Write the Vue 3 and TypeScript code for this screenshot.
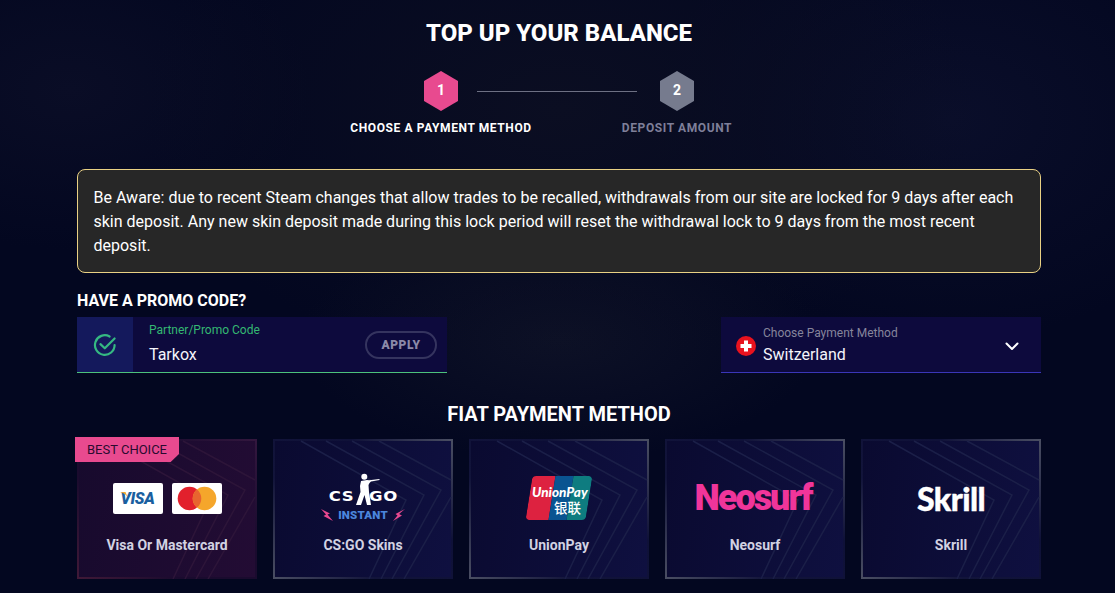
<script setup lang="ts">
interface Method { name: string; kind: string; best?: boolean }
const methods: Method[] = [
  { name: 'Visa Or Mastercard', kind: 'cards', best: true },
  { name: 'CS:GO Skins', kind: 'csgo' },
  { name: 'UnionPay', kind: 'union' },
  { name: 'Neosurf', kind: 'neosurf' },
  { name: 'Skrill', kind: 'skrill' },
]
</script>

<template>
  <main class="page">
    <h1 class="title">TOP UP YOUR BALANCE</h1>

    <section class="stepper">
      <div class="hex pink">1</div>
      <div class="line"></div>
      <div class="hex grey">2</div>
      <div class="step-label active">CHOOSE A PAYMENT METHOD</div>
      <div></div>
      <div class="step-label">DEPOSIT AMOUNT</div>
    </section>

    <p class="alert">Be Aware: due to recent Steam changes that allow trades to be recalled, withdrawals from our site are locked for 9 days after each skin deposit. Any new skin deposit made during this lock period will reset the withdrawal lock to 9 days from the most recent deposit.</p>

    <h2 class="promo-title">HAVE A PROMO CODE?</h2>
    <section class="fields">
      <div class="promo">
        <div class="promo-icon">
          <svg width="24" height="24" viewBox="0 0 22 22" fill="none" stroke="#35b982" stroke-width="2" stroke-linecap="round" stroke-linejoin="round">
            <path d="M19.8 11a9 9 0 1 1-4.6-7.8" />
            <path d="M6.8 10.2l4 3.8 9-9" />
          </svg>
        </div>
        <div class="promo-body">
          <div class="promo-label">Partner/Promo Code</div>
          <div class="promo-value">Tarkox</div>
        </div>
        <div class="apply">APPLY</div>
      </div>

      <div class="select">
        <svg class="flag" width="20" height="20" viewBox="0 0 20 20">
          <circle cx="10" cy="10" r="10" fill="#e8121e" />
          <path d="M8 4.5h4V8h3.5v4H12v3.500H8V12H4.500V8H8z" fill="#fff" />
        </svg>
        <div class="select-body">
          <div class="select-label">Choose Payment Method</div>
          <div class="select-value">Switzerland</div>
        </div>
        <svg class="chev" width="14" height="9" viewBox="0 0 14 9" fill="none" stroke="#fff" stroke-width="2" stroke-linecap="round" stroke-linejoin="round">
          <path d="M1.500 1.500L7 7l5.500-5.500" />
        </svg>
      </div>
    </section>

    <h2 class="fiat-title">FIAT PAYMENT METHOD</h2>
    <section class="cards">
      <article v-for="m in methods" :key="m.name" class="card" :class="{ best: m.best }">
        <svg class="chevrons" viewBox="0 0 180 140" preserveAspectRatio="none" fill="none">
          <path d="M28 2L133 61L96 140" />
          <path d="M53 2L151 56L108 140" />
          <path d="M79 2L168 51L119 140" />
          <path d="M106 2L178 41" />
          <path d="M178 58L131 140" />
        </svg>
        <div v-if="m.best" class="badge">BEST CHOICE</div>

        <div class="logo">
          <div v-if="m.kind === 'cards'" class="paycards">
            <div class="paycard visa">
              <svg class="visa-tick" width="8" height="5" viewBox="0 0 8 5"><path d="M0 0h5.500L7.500 5C6 2.500 3 .8 0 0z" fill="#f0a830" /></svg>
              <span>VISA</span>
            </div>
            <div class="paycard">
              <svg width="40" height="25" viewBox="0 0 40 25">
                <circle cx="12.500" cy="12.500" r="11.800" fill="#e2202c" />
                <circle cx="27.500" cy="12.500" r="11.800" fill="#f5a62b" />
                <path d="M20 3.400a11.800 11.800 0 0 1 0 18.200a11.800 11.800 0 0 1 0-18.200z" fill="#e8652f" />
              </svg>
            </div>
          </div>

          <div v-else-if="m.kind === 'csgo'" class="csgo">
            <div class="csgo-main">
              <span>CS</span>
              <svg class="soldier" width="24" height="34" viewBox="0 0 24 34" fill="#fff">
                <circle cx="8.300" cy="4.700" r="3" />
                <path d="M5 9L11 8L13 8.200L23.500 7L23.500 8L15 9.500L13.500 11L12.500 13L13 20L15 33L11 33L8.500 23L5 33L0 33L4.500 20L4 14z" />
              </svg>
              <span>GO</span>
            </div>
            <div class="instant">
              <svg width="12" height="12" viewBox="0 0 12 12" fill="#e8488f"><path d="M0 0L9 4.500L6.500 5.500L12 12L2.500 7L5 5.500z" /></svg>
              <span>INSTANT</span>
              <svg width="12" height="12" viewBox="0 0 12 12" fill="#e8488f"><path d="M12 0L6 5L9 6.500L0 12L4.500 6.500L2.500 5z" /></svg>
            </div>
          </div>

          <div v-else-if="m.kind === 'union'" class="union">
            <div class="union-stripes">
              <i class="s-red"></i><i class="s-blue"></i><i class="s-teal"></i>
            </div>
            <div class="union-text">
              <b>UnionPay</b>
              <em>银联</em>
            </div>
          </div>

          <div v-else-if="m.kind === 'neosurf'" class="neosurf">Neosurf</div>
          <div v-else class="skrill">Skrill</div>
        </div>

        <div class="card-name">{{ m.name }}</div>
      </article>
    </section>
  </main>
</template>

<style>
html, body { margin: 0; background: #030720; }
</style>

<style scoped>
.page {
  box-sizing: border-box;
  width: 1115px;
  height: 593px;
  overflow: hidden;
  padding: 0 74px 0 77px;
  font-family: Roboto, "Liberation Sans", sans-serif;
  color: #fff;
  background:
    radial-gradient(ellipse 420px 260px at 560px 110px, #0b0e22 0%, rgba(11, 14, 34, 0) 100%),
    radial-gradient(ellipse 260px 120px at 560px 340px, #0d1126 0%, rgba(13, 17, 38, 0) 100%),
    radial-gradient(ellipse 240px 160px at 70px 90px, #0a0d26 0%, rgba(10, 13, 38, 0) 100%),
    radial-gradient(ellipse 300px 220px at 950px 120px, #0a0e2a 0%, rgba(10, 14, 42, 0) 100%),
    #030720;
}
.title {
  margin: 0;
  padding-top: 19px;
  font-size: 24px;
  line-height: 28px;
  font-weight: 800;
  text-align: center;
}
.stepper {
  display: grid;
  grid-template-columns: 182px 90px 110px;
  margin: 24px 0 0 273px;
  justify-items: center;
  align-items: center;
}
.hex {
  width: 34px;
  height: 40px;
  display: flex;
  align-items: center;
  justify-content: center;
  clip-path: polygon(50% 0, 100% 25%, 100% 75%, 50% 100%, 0 75%, 0 25%);
  font-size: 14px;
  font-weight: 700;
  padding-bottom: 2px;
  box-sizing: border-box;
}
.pink { background: #e84a8f; }
.grey { background: #767b8e; }
.line {
  justify-self: stretch;
  height: 1px;
  margin: 0 -15px 0 -55px;
  background: #6d7083;
}
.step-label {
  margin-top: 10px;
  font-size: 12px;
  line-height: 14px;
  font-weight: 700;
  letter-spacing: 0.6px;
  white-space: nowrap;
  color: #7e7f99;
}
.step-label.active { color: #fff; }
.alert {
  box-sizing: border-box;
  height: 104px;
  margin: 34px 0 0;
  padding: 16px 15.500px;
  border: 1px solid #e9d184;
  border-radius: 8px;
  background: #272727;
  font-size: 16px;
  line-height: 24px;
  color: #fff;
}
.promo-title {
  margin: 18px 0 0;
  font-size: 16px;
  line-height: 19px;
  font-weight: 700;
}
.fields {
  display: flex;
  justify-content: space-between;
  margin-top: 7px;
}
.promo, .select {
  box-sizing: border-box;
  height: 56px;
  display: flex;
  align-items: center;
  background: #0d0a3d;
}
.promo { width: 370px; border-bottom: 1px solid #4cc27c; }
.promo-icon {
  width: 56px;
  height: 55px;
  display: flex;
  align-items: center;
  justify-content: center;
  background: #14195c;
}
.promo-body { flex: 1; padding: 0 0 0 16px; }
.promo-label {
  font-size: 12px;
  line-height: 14px;
  color: #34b872;
  margin-top: -2px;
}
.promo-value {
  margin-top: 8px;
  font-size: 16px;
  line-height: 19px;
  color: #f4f4fa;
}
.apply {
  box-sizing: border-box;
  width: 72px;
  height: 28px;
  margin: 0 10px 0 0;
  display: flex;
  align-items: center;
  justify-content: center;
  border: 2px solid #35345f;
  border-radius: 14px;
  font-size: 12px;
  font-weight: 900;
  letter-spacing: 0.6px;
  color: #8b89a8;
}
.select {
  width: 320px;
  padding: 0 22px 0 15px;
  border-bottom: 1px solid #3a36b8;
}
.flag { margin-top: 2px; }
.select-body { flex: 1; margin-left: 7px; }
.select-label {
  font-size: 12px;
  line-height: 14px;
  color: #86859c;
  margin-top: 1px;
}
.select-value {
  margin-top: 5px;
  font-size: 16px;
  line-height: 19px;
  color: #f4f4fa;
}
.chev { margin-top: 4px; }
.fiat-title {
  margin: 30px 0 0;
  font-size: 20px;
  line-height: 22px;
  font-weight: 700;
  text-align: center;
}
.cards {
  display: grid;
  grid-template-columns: repeat(5, 180px);
  gap: 16px;
  margin-top: 14px;
}
.card {
  position: relative;
  box-sizing: border-box;
  height: 140px;
  border: 2px solid transparent;
  border-image: linear-gradient(45deg, #4a4e62, #12143a 32%, #0f1138 68%, #4a4e62) 1;
  background: linear-gradient(100deg, #0a0a30, #0f1040);
  text-align: center;
}
.card.best {
  border-image: linear-gradient(45deg, #401937, #1a0b2e 32%, #1a0b2e 68%, #33173e) 1;
  background: linear-gradient(100deg, #170a2d, #230c34);
}
.chevrons {
  position: absolute;
  inset: -2px;
  width: calc(100% + 4px);
  height: calc(100% + 4px);
  stroke: #1b1f48;
  stroke-width: 1.500;
}
.best .chevrons { stroke: #2d1539; }
.badge {
  position: absolute;
  left: -4px;
  top: -4px;
  width: 104px;
  height: 25px;
  display: flex;
  align-items: center;
  justify-content: center;
  clip-path: polygon(0 0, 100% 0, 100% 68%, 92% 100%, 0 100%);
  background: #e84a8f;
  color: #2a0a30;
  font-size: 13px;
}
.logo {
  position: relative;
  height: 78px;
  margin-top: 18px;
  display: flex;
  align-items: center;
  justify-content: center;
}
.card-name {
  position: relative;
  font-size: 14px;
  line-height: 16px;
  font-weight: 700;
  color: #d2d2e2;
}
.paycards { display: flex; gap: 9px; }
.paycard {
  position: relative;
  box-sizing: border-box;
  width: 50px;
  height: 31px;
  display: flex;
  align-items: center;
  justify-content: center;
  background: #fff;
  border-radius: 2px;
}
.visa span {
  font-size: 16px;
  font-weight: 900;
  font-style: italic;
  color: #1a5fa0;
  letter-spacing: -0.3px;
}
.visa-tick { position: absolute; left: 7px; top: 9px; }
.csgo { display: flex; flex-direction: column; align-items: center; margin-top: -3px; }
.csgo-main {
  display: flex;
  align-items: flex-end;
  justify-content: center;
  height: 34px;
  font-family: "DejaVu Sans", sans-serif;
  font-size: 14px;
  line-height: 14px;
  font-weight: 700;
}
.csgo-main span {
  display: inline-block;
  width: 27px;
  margin-bottom: 3px;
  letter-spacing: 0.5px;
  transform: scaleX(1.180);
}
.soldier { margin: 0 -10px 0 1px; }
.instant {
  display: flex;
  align-items: center;
  justify-content: center;
  gap: 5px;
  margin-top: 3px;
  font-size: 11.500px;
  line-height: 12px;
  font-weight: 900;
  letter-spacing: 0.2px;
  color: #4b86dd;
}
.union {
  position: relative;
  width: 68px;
  height: 44px;
}
.union-stripes {
  display: flex;
  width: 60px;
  height: 44px;
  margin-left: 4px;
  transform: skewX(-9deg);
  border-radius: 4px;
  overflow: hidden;
}
.union-stripes i { display: block; }
.s-red { width: 23px; background: #dd2240; }
.s-blue { width: 18px; background: #0a5491; }
.s-teal { width: 19px; background: #0e7c80; }
.union-text {
  position: absolute;
  left: 7px;
  top: 10px;
  width: 56px;
  color: #fff;
  text-align: left;
}
.union-text b {
  display: block;
  font-size: 13.500px;
  line-height: 13px;
  font-style: italic;
  font-weight: 900;
  font-family: Lato, sans-serif;
  white-space: nowrap;
}
.union-text em {
  display: block;
  margin: 1px 0 0 22px;
  font-style: normal;
  font-family: "Noto Sans CJK SC", sans-serif;
  font-size: 13.500px;
  line-height: 15px;
  font-weight: 500;
  white-space: nowrap;
}
.neosurf {
  font-family: Roboto, sans-serif;
  font-weight: 900;
  font-size: 36px;
  line-height: 40px;
  color: #f0359a;
  letter-spacing: -2px;
  margin-left: -4px;
}
.skrill {
  font-family: Lato, sans-serif;
  font-weight: 900;
  font-size: 32px;
  line-height: 36px;
  letter-spacing: -0.6px;
  -webkit-text-stroke: 0.4px #fff;
  color: #fff;
  margin-top: 2px;
}
</style>
